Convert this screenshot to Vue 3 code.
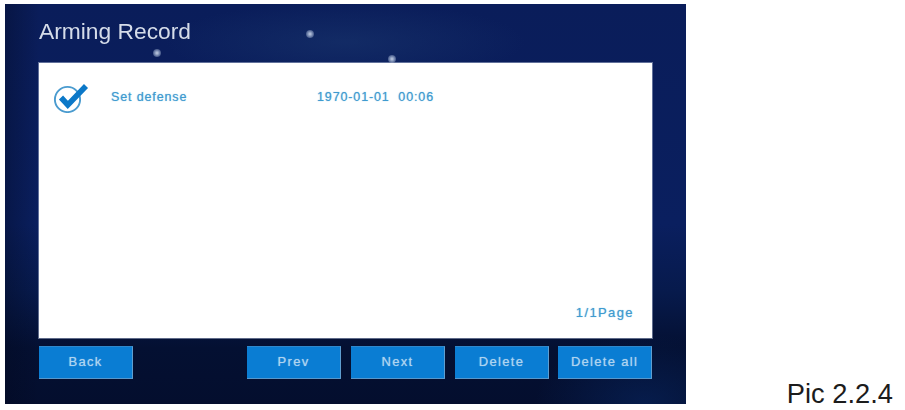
<script setup>
const stars = [
  { x: 301, y: 26, s: 8 },
  { x: 148, y: 45, s: 8 },
  { x: 383, y: 51, s: 8 },
]
const pager = ['Prev', 'Next', 'Delete', 'Delete all']
</script>

<template>
  <div class="page">
    <main class="screen">
      <span
        v-for="(star, i) in stars"
        :key="i"
        class="star"
        :style="{ left: star.x + 'px', top: star.y + 'px', width: star.s + 'px', height: star.s + 'px' }"
      ></span>
      <h1 class="title">Arming Record</h1>
      <section class="panel">
        <div class="row">
          <svg class="check" viewBox="0 0 38 32" width="38" height="32" aria-hidden="true">
            <circle cx="14.5" cy="18.5" r="12.6" fill="none" stroke="#4a9bcf" stroke-width="1.9" />
            <path d="M8 16.5 L14.8 24 L33 5" fill="none" stroke="#0b78c8" stroke-width="5.6" stroke-linejoin="miter" />
          </svg>
          <span class="name">Set defense</span>
          <span class="date">1970-01-01&nbsp;&nbsp;00:06</span>
        </div>
        <div class="page-count">1/1Page</div>
      </section>
      <nav class="actions">
        <button class="btn">Back</button>
        <div class="group">
          <button v-for="label in pager" :key="label" class="btn">{{ label }}</button>
        </div>
      </nav>
    </main>
    <div class="caption">Pic 2.2.4</div>
  </div>
</template>

<style scoped>
.page {
  width: 905px;
  height: 410px;
  box-sizing: border-box;
  padding: 4px 12px 0 5px;
  display: flex;
  justify-content: space-between;
  align-items: flex-start;
  background: #fff;
  font-family: "Liberation Sans", Arial, sans-serif;
  overflow: hidden;
}
.screen {
  position: relative;
  width: 681px;
  height: 400px;
  box-sizing: border-box;
  padding: 0 34px;
  display: flex;
  flex-direction: column;
  background:
    radial-gradient(ellipse 180px 40px at 340px 38px, rgba(24, 52, 108, 0.6), transparent),
    radial-gradient(ellipse 110px 70px at 640px 400px, rgba(8, 38, 96, 0.6), transparent),
    linear-gradient(90deg, rgba(2, 8, 30, 0.35), transparent 5%),
    linear-gradient(180deg, #0a1d5a 0%, #0a1f5f 55%, #071a4c 72%, #041032 86%, #040e2e 100%);
}
.star {
  position: absolute;
  border-radius: 50%;
  background: radial-gradient(circle, #c4cee2 0%, #8fa0c2 30%, rgba(130, 150, 190, 0) 100%);
}
.title {
  margin: 0;
  height: 59px;
  box-sizing: border-box;
  padding: 14px 0 0;
  font-size: 22.8px;
  line-height: 27px;
  font-weight: 400;
  color: #d5dce9;
  filter: blur(0.4px);
}
.panel {
  position: relative;
  z-index: 1;
  height: 275px;
  box-sizing: border-box;
  padding: 17px 18px 18px 14px;
  display: flex;
  flex-direction: column;
  justify-content: space-between;
  background: #fff;
  box-shadow: 0 0 0 1px rgba(170, 180, 205, 0.55);
}
.row {
  display: flex;
  align-items: center;
  height: 34px;
  font-size: 12.5px;
  letter-spacing: 0.87px;
  color: #3f9bd0;
  text-shadow: 0 0 1px rgba(63, 155, 208, 0.7);
}
.check {
  flex: none;
  filter: blur(0.3px);
}
.name {
  margin-left: 20px;
  width: 206px;
}
.page-count {
  align-self: flex-end;
  font-size: 13px;
  letter-spacing: 1.4px;
  color: #3f9bd0;
  text-shadow: 0 0 1px rgba(63, 155, 208, 0.7);
}
.actions {
  margin-top: 8px;
  display: flex;
  justify-content: space-between;
}
.group {
  display: flex;
  gap: 10px;
}
.group .btn:last-child {
  margin-left: -1px;
}
.btn {
  width: 94px;
  height: 33px;
  padding: 0 0 2px;
  border: 0;
  border-top: 1px solid #2f88cc;
  border-right: 1px solid #5f9ed0;
  border-bottom: 1px solid #5797cb;
  background: #0a7dd3;
  color: #aed4f0;
  font-family: inherit;
  font-size: 13px;
  letter-spacing: 1.3px;
  text-shadow: 0 0 1px rgba(174, 212, 240, 0.8);
}
.caption {
  align-self: flex-end;
  margin-bottom: 1px;
  font-size: 27.3px;
  line-height: 31px;
  color: #1c1c1c;
}
</style>
